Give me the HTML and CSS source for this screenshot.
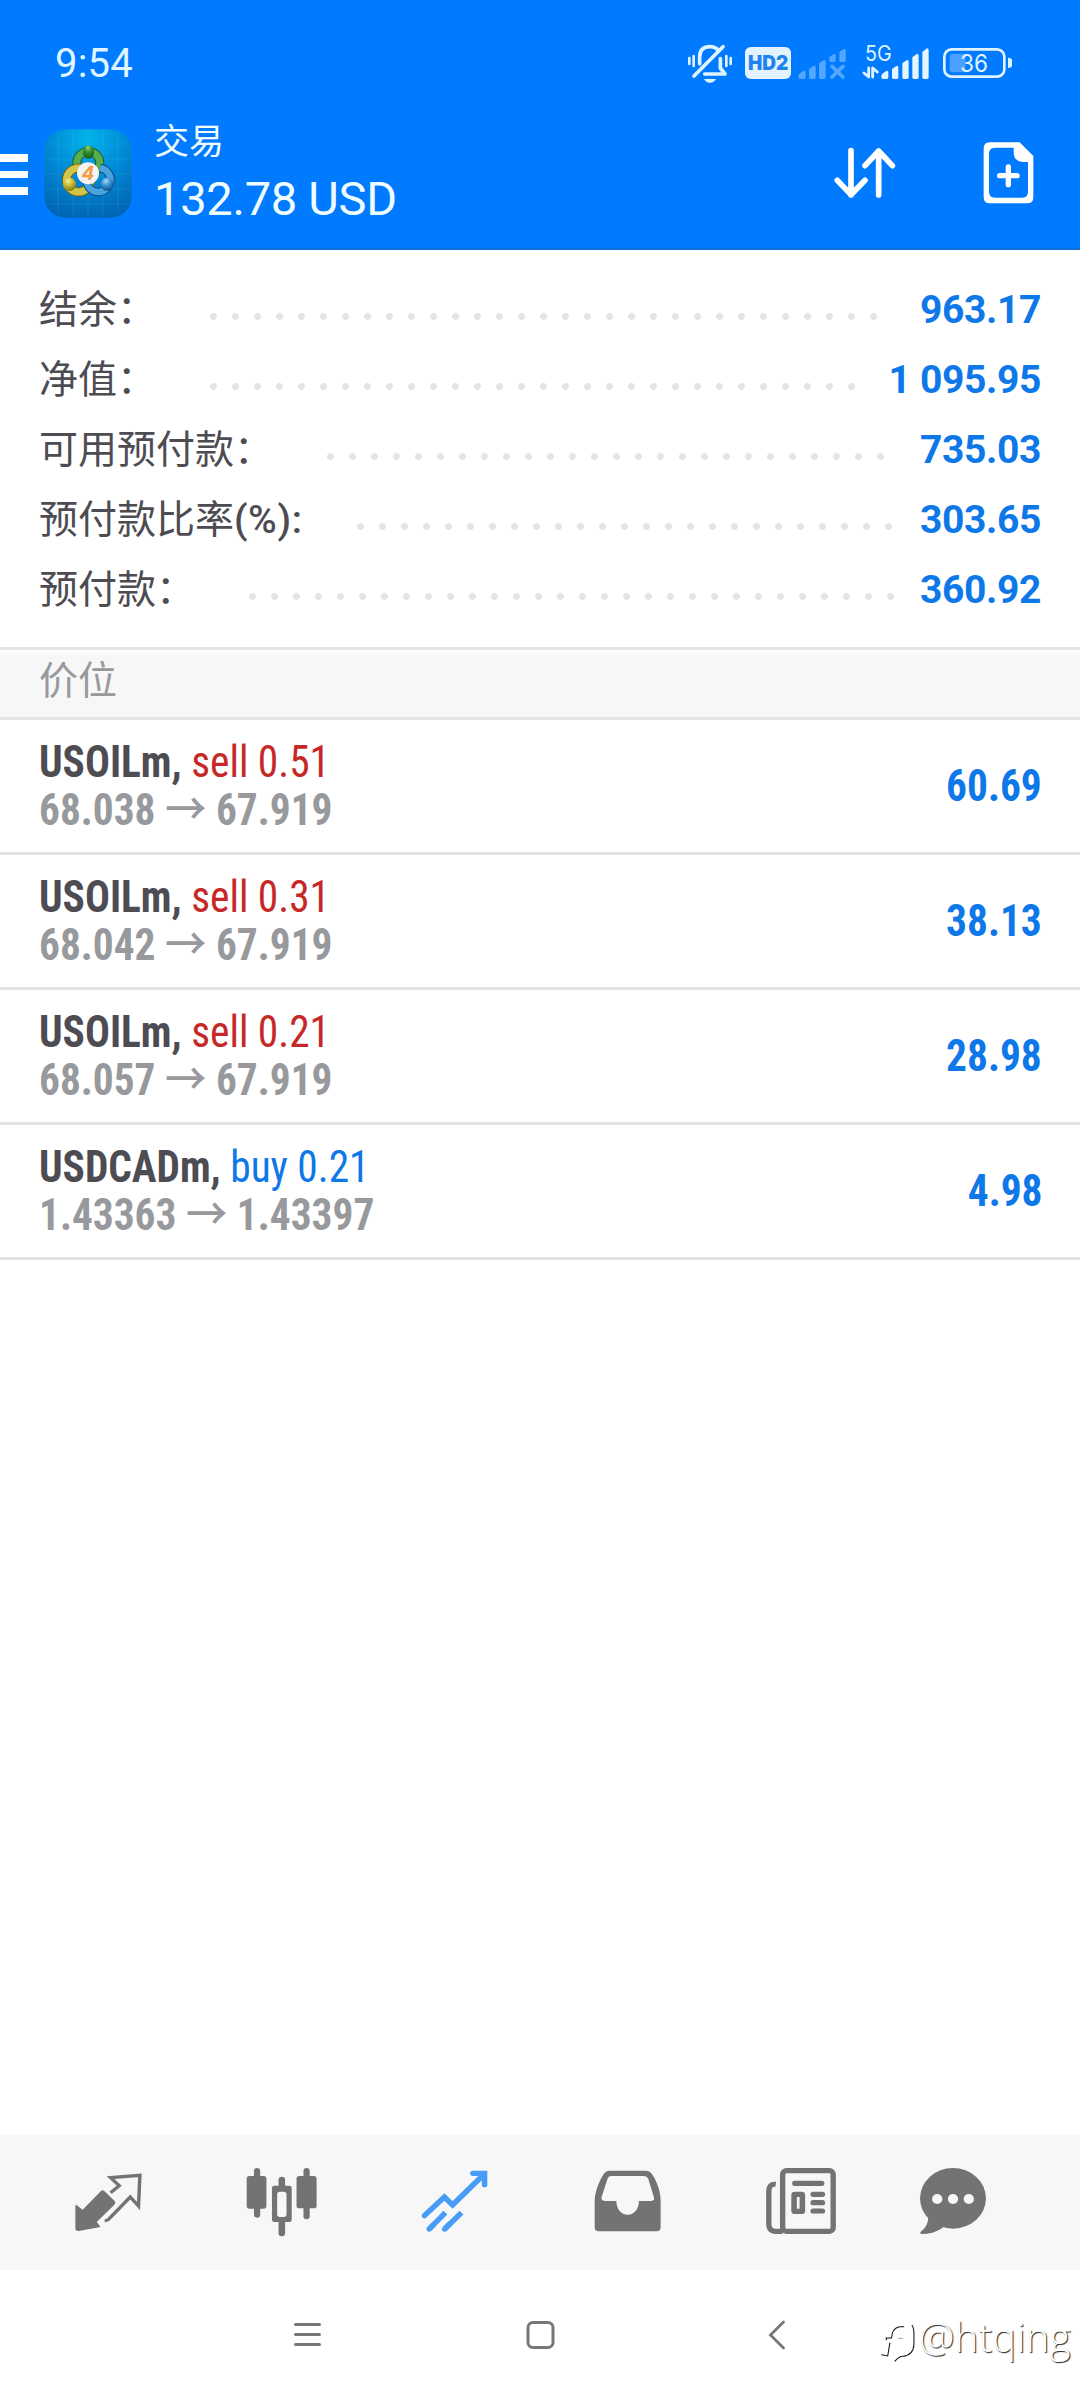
FILE: index.html
```html
<!DOCTYPE html>
<html lang="zh-CN">
<head>
<meta charset="utf-8">
<title>交易</title>
<link rel="stylesheet" href="styles.css">
</head>
<body>
<header class="header">
  <div class="status">
    <span class="time">9:54</span>
    <div class="status-icons">
      <svg class="bell" width="46" height="40" viewBox="81 72 138 120">
        <g fill="none" stroke="#dff3ff" stroke-linecap="round" stroke-linejoin="round">
          <path stroke-width="11" d="M119 131V110Q120 80 150 80Q166 80 176 92M102 168L189 80"/>
          <path stroke-width="11" d="M181 116V144L195 162H134"/>
          <path stroke-width="8" d="M88 114V132M101 108V138M199 108V138M212 114V132"/>
        </g>
        <path fill="#dff3ff" d="M132 177H168Q163 188 150 188Q137 188 132 177Z"/>
      </svg>
      <svg class="hd" width="46" height="40" viewBox="255 72 138 120">
        <rect x="255" y="81" width="138" height="96" rx="17" fill="#e3f2ff"/>
        <text x="264" y="150" font-size="60" font-weight="900" textLength="121" lengthAdjust="spacingAndGlyphs" fill="#1f83ee">HD2</text>
      </svg>
      <svg class="sim1" width="48" height="40" viewBox="414 72 144 120">
        <g fill="#53a7ff">
          <path d="M415 170Q415 163 420 160L431 152Q437 152 437 157V172Q437 177 432 177H420Q415 177 415 170Z"/>
          <path d="M447 147L462 137Q467 137 467 142V172Q467 177 462 177H452Q447 177 447 172Z"/>
          <path d="M477 130L492 120Q497 120 497 125V172Q497 177 492 177H482Q477 177 477 172Z"/>
          <path d="M508 112L522 101Q527 101 527 106V121Q527 126 522 126H513Q508 126 508 121Z"/>
          <path d="M538 96L552 86Q557 86 557 91V121Q557 126 552 126H543Q538 126 538 121Z"/>
        </g>
        <path d="M516 139L549 171M549 139L516 171" stroke="#53a7ff" stroke-width="11" stroke-linecap="round"/>
      </svg>
      <svg class="sim2" width="67" height="40" viewBox="606 72 201 120">
        <text x="615" y="124" font-size="63" textLength="80" lengthAdjust="spacingAndGlyphs" fill="#dff3ff">5G</text>
        <path d="M626 144V171L612 159M638 171V144L652 156" fill="none" stroke="#dff3ff" stroke-width="8.500" stroke-linecap="round" stroke-linejoin="round"/>
        <g fill="#e3f5ff">
          <path d="M664 170Q664 163 669 160L680 152Q685 152 685 157V172Q685 177 680 177H669Q664 177 664 170Z"/>
          <path d="M696 147L710 137Q715 137 715 142V172Q715 177 710 177H701Q696 177 696 172Z"/>
          <path d="M727 130L741 120Q746 120 746 125V172Q746 177 741 177H732Q727 177 727 172Z"/>
          <path d="M757 112L771 101Q776 101 776 106V172Q776 177 771 177H762Q757 177 757 172Z"/>
          <path d="M787 96L801 85Q806 85 806 90V172Q806 177 801 177H792Q787 177 787 172Z"/>
        </g>
      </svg>
      <svg class="battery" width="69" height="40" viewBox="849 72 207 120">
        <rect x="853" y="88" width="180" height="82" rx="22" fill="none" stroke="#dff3ff" stroke-width="8"/>
        <path fill="#4a9fff" d="M878 101H917V157H878Q869 157 869 148V110Q869 101 878 101Z"/>
        <path fill="#dff3ff" d="M1044 113Q1056 113 1056 121V136Q1056 144 1044 144Z"/>
        <text x="900" y="157" font-size="73" textLength="84" lengthAdjust="spacingAndGlyphs" fill="#dff3ff">36</text>
      </svg>
    </div>
  </div>
  <div class="toolbar">
    <div class="burger"><i></i><i></i><i></i></div>
    <svg class="logo" width="88" height="89" viewBox="0 0 88 89">
      <defs>
        <radialGradient id="lg-bg" cx=".5" cy=".1" r=".95"><stop offset="0" stop-color="#00b4ea"/><stop offset=".5" stop-color="#0087d4"/><stop offset="1" stop-color="#0062b2"/></radialGradient>
        <radialGradient id="lg-g" cx=".45" cy=".2" r=".8"><stop offset="0" stop-color="#8fd086"/><stop offset=".4" stop-color="#34962f"/><stop offset="1" stop-color="#125a17"/></radialGradient>
        <radialGradient id="lg-y" cx=".4" cy=".25" r=".8"><stop offset="0" stop-color="#f5ec90"/><stop offset=".5" stop-color="#c4b630"/><stop offset="1" stop-color="#776c12"/></radialGradient>
        <radialGradient id="lg-b" cx=".4" cy=".25" r=".8"><stop offset="0" stop-color="#9fd6f8"/><stop offset=".5" stop-color="#2f8acb"/><stop offset="1" stop-color="#0a4c8a"/></radialGradient>
      </defs>
      <rect x=".3" y=".3" width="87.400" height="88.400" rx="21" fill="url(#lg-bg)"/>
      <path d="M14 4V85M29 1V88M44 1V88M59 1V88M74 4V85M4 15H84M1 30H87M1 45H87M1 60H87M4 75H84" stroke="#5cc4f0" stroke-opacity=".16"/>
      <g fill="none">
        <circle cx="44.300" cy="34" r="11.500" stroke="#1e5e22" stroke-width="9"/>
        <circle cx="44.300" cy="34" r="11.500" stroke="#58ad50" stroke-width="7"/>
        <circle cx="34.500" cy="51" r="12" stroke="#756b14" stroke-width="9"/>
        <circle cx="34.500" cy="51" r="12" stroke="#d2c548" stroke-width="7"/>
        <path d="M56 39A12 12 0 1 1 42.500 52" stroke="#0a4c8a" stroke-width="8.500"/>
        <path d="M56 39A12 12 0 1 1 42.500 52" stroke="#4ba3dd" stroke-width="6.500"/>
      </g>
      <ellipse cx="44.600" cy="23" rx="5.600" ry="6.800" fill="url(#lg-g)"/>
      <circle cx="25.500" cy="55.300" r="6.600" fill="url(#lg-y)"/>
      <circle cx="63.200" cy="55.300" r="6.600" fill="url(#lg-b)"/>
      <circle cx="44" cy="44.300" r="11" fill="#f4f3f4"/>
      <text x="44" y="51.300" text-anchor="middle" font-size="19" font-weight="700" font-style="italic" fill="#f49a45">4</text>
    </svg>
    <div class="title">
      <div class="title-name">交易</div>
      <div class="title-sum">132.78 USD</div>
    </div>
    <svg class="sort" width="62" height="52" viewBox="162 111 186 156" fill="none" stroke="#fff" stroke-width="17" stroke-linecap="round" stroke-linejoin="round">
      <path d="M213 122V255M172 211L213 254L255 211M296 255V124M255 167L296 123L337 167"/>
    </svg>
    <svg class="new-order" width="51" height="62" viewBox="608 96 153 186">
      <path fill="#fff" fill-rule="evenodd" d="M628 97H718L759 138V262Q759 280 741 280H628Q610 280 610 262V115Q610 97 628 97ZM644 113Q626 113 626 131V246Q626 263 644 263H726Q743 263 743 246V156H728Q700 153 700 128V113Z"/>
      <path d="M684 171V224M658 197H710" stroke="#fff" stroke-width="16" stroke-linecap="round"/>
    </svg>
  </div>
</header>

<section class="summary">
  <div class="sum-row"><span class="label">结余：</span><span class="dots" style="width:667px"></span><span class="value">963.17</span></div>
  <div class="sum-row"><span class="label">净值：</span><span class="dots" style="width:645px"></span><span class="value">1 095.95</span></div>
  <div class="sum-row"><span class="label">可用预付款：</span><span class="dots" style="width:557px"></span><span class="value">735.03</span></div>
  <div class="sum-row"><span class="label">预付款比率<b>(%):</b></span><span class="dots" style="width:535px"></span><span class="value">303.65</span></div>
  <div class="sum-row"><span class="label">预付款：</span><span class="dots" style="width:645px"></span><span class="value">360.92</span></div>
</section>

<h2 class="section-title">价位</h2>

<main class="positions">
  <div class="pos">
    <div class="pos-info"><div><b>USOILm,</b> <span class="sell">sell 0.51</span></div><div class="prices">68.038 <span class="arrow">→</span> 67.919</div></div>
    <div class="profit">60.69</div>
  </div>
  <div class="pos">
    <div class="pos-info"><div><b>USOILm,</b> <span class="sell">sell 0.31</span></div><div class="prices">68.042 <span class="arrow">→</span> 67.919</div></div>
    <div class="profit">38.13</div>
  </div>
  <div class="pos">
    <div class="pos-info"><div><b>USOILm,</b> <span class="sell">sell 0.21</span></div><div class="prices">68.057 <span class="arrow">→</span> 67.919</div></div>
    <div class="profit">28.98</div>
  </div>
  <div class="pos">
    <div class="pos-info"><div><b>USDCADm,</b> <span class="buy">buy 0.21</span></div><div class="prices">1.43363 <span class="arrow">→</span> 1.43397</div></div>
    <div class="profit">4.98</div>
  </div>
</main>

<nav class="tabs">
  <a class="tab"><svg width="69" height="70" viewBox="215 141 200 210" preserveAspectRatio="none">
    <path fill="currentColor" d="M221 254L240 269L291 215Q297 207 303 213L333 243Q337 249 332 254L281 306L292 321L229 333Q219 334 219 325V256Z"/>
    <path fill="none" stroke="currentColor" stroke-width="10" d="M321 218L346 197L321 173L406 166L402 258L378 231L315 298Q311 302 304 302"/>
  </svg></a>
  <a class="tab"><svg width="72" height="70" viewBox="713 141 208 210" preserveAspectRatio="none" fill="currentColor">
    <rect x="715" y="168" width="57" height="98" rx="8"/><rect x="736" y="144" width="18" height="149" rx="9"/>
    <rect x="859" y="168" width="58" height="97" rx="8"/><rect x="879" y="144" width="18" height="154" rx="9"/>
    <path fill-rule="evenodd" d="M795 197H838Q845 197 845 204V299Q845 306 838 306H795Q788 306 788 299V204Q788 197 795 197ZM811 215Q803 215 803 223V283Q803 291 811 291H822Q830 291 830 283V223Q830 215 822 215Z"/>
    <path d="M807 200V179Q807 170 816 170Q826 170 826 179V200ZM807 304V340Q807 349 816 349Q826 349 826 340V304Z"/>
  </svg></a>
  <a class="tab active"><svg width="67" height="70" viewBox="1221 141 195 210" preserveAspectRatio="none" fill="none" stroke="currentColor" stroke-width="16">
    <path stroke-linecap="round" d="M1231 287L1289 231L1313 255L1402 165M1372 160H1406V194"/>
    <path stroke-linecap="round" d="M1245 327L1258 313M1290 327L1303 313"/>
    <path d="M1245 327L1292 278M1290 327L1339 278"/>
    <path fill="currentColor" stroke="none" d="M1385 165L1402 182L1413 165L1402 153Z"/>
  </svg></a>
  <a class="tab"><svg width="68" height="70" viewBox="156 141 198 210" preserveAspectRatio="none">
    <path fill="currentColor" fill-rule="evenodd" d="M158 240C159 215 172 180 186 160Q191 152 200 152H309Q318 152 323 160C338 180 350 215 350 240V322Q350 334 338 334H170Q158 334 158 322ZM206 168Q199 168 196 175L178 232Q176 242 187 243H221C222 298 286 298 287 243H322Q332 242 331 234L314 176Q311 168 302 168Z"/>
  </svg></a>
  <a class="tab"><svg width="72" height="70" viewBox="654 141 208 210" preserveAspectRatio="none" fill="none" stroke="currentColor" stroke-width="15.500" stroke-linecap="round">
    <rect x="705" y="152" width="146" height="182" rx="11"/>
    <path stroke-linecap="butt" d="M685 193Q665 191 665 214V312Q665 334 684 334H705"/>
    <path d="M740 190H818M793 223H820M793 248H820M793 273H820"/>
    <rect x="738" y="223" width="24" height="51" rx="2" stroke-width="16"/>
  </svg></a>
  <a class="tab tab-last"><svg width="68" height="70" viewBox="1100 141 198 210" preserveAspectRatio="none">
    <path fill="currentColor" d="M1126 288C1129 305 1120 325 1105 335Q1100 342 1112 342C1140 342 1156 332 1171 322Z"/>
    <ellipse cx="1199" cy="235" rx="96" ry="91" fill="currentColor"/>
    <g fill="#f7f7f8"><circle cx="1153" cy="237" r="15"/><circle cx="1199" cy="237" r="15"/><circle cx="1245" cy="237" r="15"/></g>
  </svg></a>
</nav>

<footer class="sysnav">
  <svg width="28" height="30" viewBox="0 0 28 30"><path d="M1.500 4.500H25.500M1.500 14.500H25.500M1.500 24.500H25.500" stroke="#777" stroke-width="3" stroke-linecap="round"/></svg>
  <svg width="30" height="30" viewBox="0 0 30 30"><rect x="2" y="2.500" width="25" height="25" rx="5" fill="none" stroke="#777" stroke-width="3"/></svg>
  <svg width="18" height="30" viewBox="0 0 18 30"><path d="M15.500 2L2.500 15L15.500 28" fill="none" stroke="#777" stroke-width="2.800" stroke-linecap="round"/></svg>
  <div class="watermark">
    <svg width="35" height="43" viewBox="985 603 100 129" preserveAspectRatio="none" fill="none" stroke="#111" stroke-width="3">
      <path d="M1076 618Q1082 626 1082 645V675Q1081 709 1050 712Q1040 712 1027 727M1054 623H1041Q1019 627 1018 657H1003V664M1015 673H1013L1007 711L989 707"/>
      <path stroke="#999" d="M1037 658H1051"/>
    </svg>
    <span>@htqing</span>
  </div>
</footer>
</body>
</html>
```
FILE: styles.css
```css
* { box-sizing: border-box; }
body {
  margin: 0;
  width: 1080px;
  height: 2400px;
  display: flex;
  flex-direction: column;
  background: #fff;
  font-family: Roboto, "Noto Sans CJK SC", sans-serif;
  color: #4d4c52;
  overflow: hidden;
}
svg { display: block; flex: none; overflow: visible; }
svg text { font-family: Inter, sans-serif; }

.header { height: 250px; background: #007aff; border-bottom: 2px solid #0f6fd8; color: #f0fdff; }
.status { height: 104px; padding: 24px 68px 0 55px; display: flex; justify-content: space-between; }
.time { font-size: 40px; line-height: 80px; letter-spacing: 0.2px; color: #dff5ff; }
.status-icons { display: flex; padding-top: 20px; }
.hd { margin-left: 12px; }
.sim1 { margin-left: 7px; }
.sim2 { margin-left: 16px; }
.battery { margin-left: 14px; }

.toolbar { display: flex; align-items: flex-start; padding-right: 46px; }
.burger { width: 28px; padding-top: 50px; display: grid; gap: 9px; }
.burger i { height: 7.600px; background: #fff; }
.logo { margin: 25px 22px 0 16px; }
.title { flex: 1; padding-top: 17px; }
.title-name { font-size: 35px; line-height: 44px; margin-bottom: 4px; }
.title-sum { font-size: 47px; line-height: 60px; letter-spacing: -0.25px; }
.sort { margin-top: 43px; }
.new-order { margin: 38px 0 0 87px; }

.summary { padding: 25px 39px 22px 39px; border-bottom: 3px solid #e4e4e4; margin-bottom: 3px; }
.sum-row { display: flex; height: 70px; line-height: 70px; font-size: 39px; }
.label b { font-weight: 500; letter-spacing: 0.6px; }
.dots {
  height: 7px;
  margin: 38px 0 0 54px;
  background: radial-gradient(circle at 3.5px 3.5px, #e4e4e4 3px, transparent 3.8px) 0 0 / 22px 7px repeat-x;
}
.value { margin-left: auto; font-weight: 700; letter-spacing: -0.35px; color: #0f78e8; }

.section-title {
  margin: 0;
  height: 67px;
  padding-left: 39px;
  background: #f7f7f7;
  border-bottom: 3px solid #e4e4e4;
  font-size: 39px;
  font-weight: 400;
  line-height: 57px;
  color: #98999c;
}

.pos {
  height: 135px;
  padding: 18px 38px 0 39px;
  display: flex;
  justify-content: space-between;
  border-bottom: 3px solid #e4e4e4;
  font-size: 44px;
  font-stretch: 75%;
  line-height: 48px;
  white-space: nowrap;
}
.pos-info { transform: scaleX(0.94); transform-origin: left; }
.profit { transform: scaleX(0.94); transform-origin: right; padding-top: 24px; font-weight: 700; color: #0f78e8; }
.sell { color: #c62828; }
.buy { color: #0f78e8; }
.prices { height: 48px; font-weight: 700; color: #98999c; }
.arrow { font-family: "Noto Sans CJK SC", sans-serif; font-weight: 500; line-height: 0; }

.tabs { margin-top: auto; height: 135px; padding-left: 22px; display: flex; background: #f7f7f8; color: #737373; }
.tab { width: 173px; padding-top: 32px; display: flex; justify-content: center; }
.tab-last { width: 132px; }
.active { color: #479cf6; }

.sysnav { position: relative; height: 130px; padding: 50px 0 0 294px; display: flex; }
.sysnav > svg:nth-child(2) { margin-left: 204px; }
.sysnav > svg:nth-child(3) { margin-left: 212px; }
.watermark { position: absolute; left: 880px; top: 50px; display: flex; }
.watermark span {
  margin: -5px 0 0 4px;
  font: 300 40px/44px "Open Sans", sans-serif;
  letter-spacing: 0.3px;
  color: #fff;
  text-shadow: 1px 1px 1px #222;
}
```
